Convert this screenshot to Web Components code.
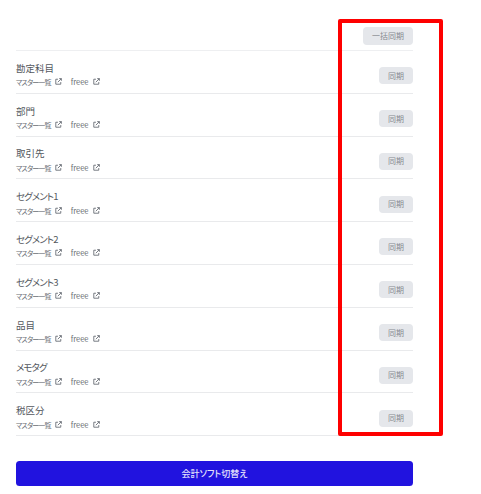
<!DOCTYPE html>
<html lang="ja"><head><meta charset="utf-8"><style>
html,body{margin:0;background:#fff}
body{width:481px;height:494px;overflow:hidden;position:relative;font-family:"Noto Sans CJK JP","Noto Sans",sans-serif}
</style></head><body>
<sync-panel></sync-panel>
<script>
const FONT='"Noto Sans CJK JP","Noto Sans",sans-serif';
customElements.define('sync-button',class extends HTMLElement{
  constructor(){super();this.attachShadow({mode:'open'}).innerHTML=`<style>
  :host{display:inline-flex;align-items:center;justify-content:center;height:17px;width:var(--w,34px);background:#e5e7eb;border-radius:4px;color:#85898f;font:8px/1 ${FONT};white-space:nowrap}
  </style><slot></slot>`;}
});
customElements.define('ext-link',class extends HTMLElement{
  constructor(){super();this.attachShadow({mode:'open'}).innerHTML=`<style>
  :host{display:inline-flex;align-items:center;height:8px;gap:4px;color:#6a6e74;font:var(--size,7px)/8px ${FONT};font-feature-settings:"palt";white-space:nowrap}
  svg{width:7px;height:7px;display:block;margin-top:-1px}
  </style><slot></slot><svg viewBox="0 0 8 8" fill="none" stroke="#555b63" stroke-width=".9"><path d="M3.400 1.400H.9v5.700h5.700V4.600"/><path d="M3.200 4.800 7.200.8M4.800.7h2.500v2.500"/></svg>`;}
});
customElements.define('master-row',class extends HTMLElement{
  constructor(){super();const t=this.getAttribute('label');const kana=/^[セメ]/.test(t);this.attachShadow({mode:'open'}).innerHTML=`<style>
  :host{display:flex;align-items:flex-end;justify-content:space-between;height:42.800px;box-sizing:border-box;border-bottom:1px solid #e9eaec;padding-bottom:8.500px}
  .t{font:9.500px/13px ${FONT};font-feature-settings:"palt";color:#53575d;margin-bottom:3.500px}
  .t.kana{letter-spacing:-.9px}
  .l{display:flex;gap:9px;align-items:center;margin-bottom:-2px}
  ext-link:first-child{letter-spacing:-.8px}
  ext-link+ext-link{--size:7.500px}
  </style><div><div class="t${kana?' kana':''}">${t}</div><div class="l"><ext-link>マスター一覧</ext-link><ext-link>freee</ext-link></div></div><sync-button>同期</sync-button>`;}
});
customElements.define('sync-panel',class extends HTMLElement{
  constructor(){super();const rows=['勘定科目','部門','取引先','セグメント1','セグメント2','セグメント3','品目','メモタグ','税区分'];
  this.attachShadow({mode:'open'}).innerHTML=`<style>
  :host{display:block;width:397px;padding:27px 0 0 16px;position:relative;height:467px}
  .head{display:flex;justify-content:flex-end;height:23px;border-bottom:1px solid #eeeff1}
  .head sync-button{height:18px;--w:50px}
  .go{display:flex;align-items:center;justify-content:center;height:25px;margin-top:25px;background:#2113df;border-radius:3.500px;color:#e4e2fb;font:500 9px/1 ${FONT};font-feature-settings:"palt"}
  .mark{position:absolute;left:338px;top:19px;width:105px;height:417px;box-sizing:border-box;border:4px solid #fe0000;border-radius:2px}
  </style><div class="head"><sync-button>一括同期</sync-button></div>
  ${rows.map(r=>`<master-row label="${r}"></master-row>`).join('')}
  <div class="go">会計ソフト切替え</div><div class="mark"></div>`;}
});
</script></body></html>
